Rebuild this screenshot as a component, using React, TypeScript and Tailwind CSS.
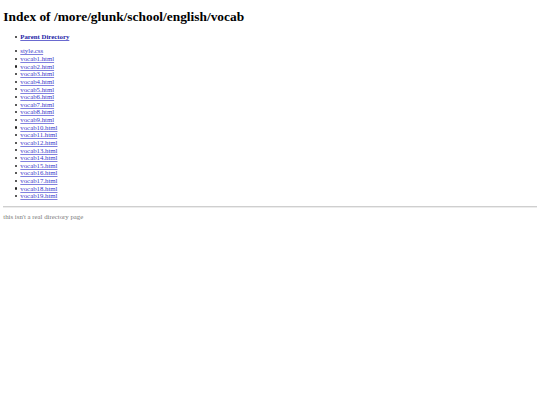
function Item({ children }: { children: React.ReactNode }) {
  return (
    <li className="flex items-center gap-[3.5px]">
      <span className="w-[2.2px] h-[2.2px] rounded-full bg-[#222] shrink-0" />
      {children}
    </li>
  );
}

export default function App() {
  const files = [
    "style.css",
    ...Array.from({ length: 19 }, (_, i) => `vocab${i + 1}.html`),
  ];
  return (
    <div className="bg-white min-h-[405px] px-[3.33px] pt-[8.93px] pb-[3.33px] font-['Liberation_Serif',serif] text-black text-[6.8px] leading-[7.63px]">
      <h1 className="text-[13.4px] leading-[15.3px] font-bold m-0">
        Index of /more/glunk/school/english/vocab
      </h1>
      <ul className="list-none pl-[11.3px] mt-[8.93px] mb-[6.67px]">
        <Item>
          <a href="#" className="text-[#1c1ca6] underline decoration-[#6a6ad0] font-bold">
            Parent Directory
          </a>
        </Item>
      </ul>
      <ul className="list-none pl-[11.3px] mt-0 mb-[5.8px]">
        {files.map((f) => (
          <Item key={f}>
            <a href="#" className="text-[#3a3acc] underline decoration-[#8080dd]">
              {f}
            </a>
          </Item>
        ))}
      </ul>
      <div className="h-[1px] bg-[#cfcfcf] border-b border-[#ececec] box-content" />
      <p className="mt-[3.33px] pt-[1.5px] text-[#7a7a7a]">this isn't a real directory page</p>
    </div>
  );
}
